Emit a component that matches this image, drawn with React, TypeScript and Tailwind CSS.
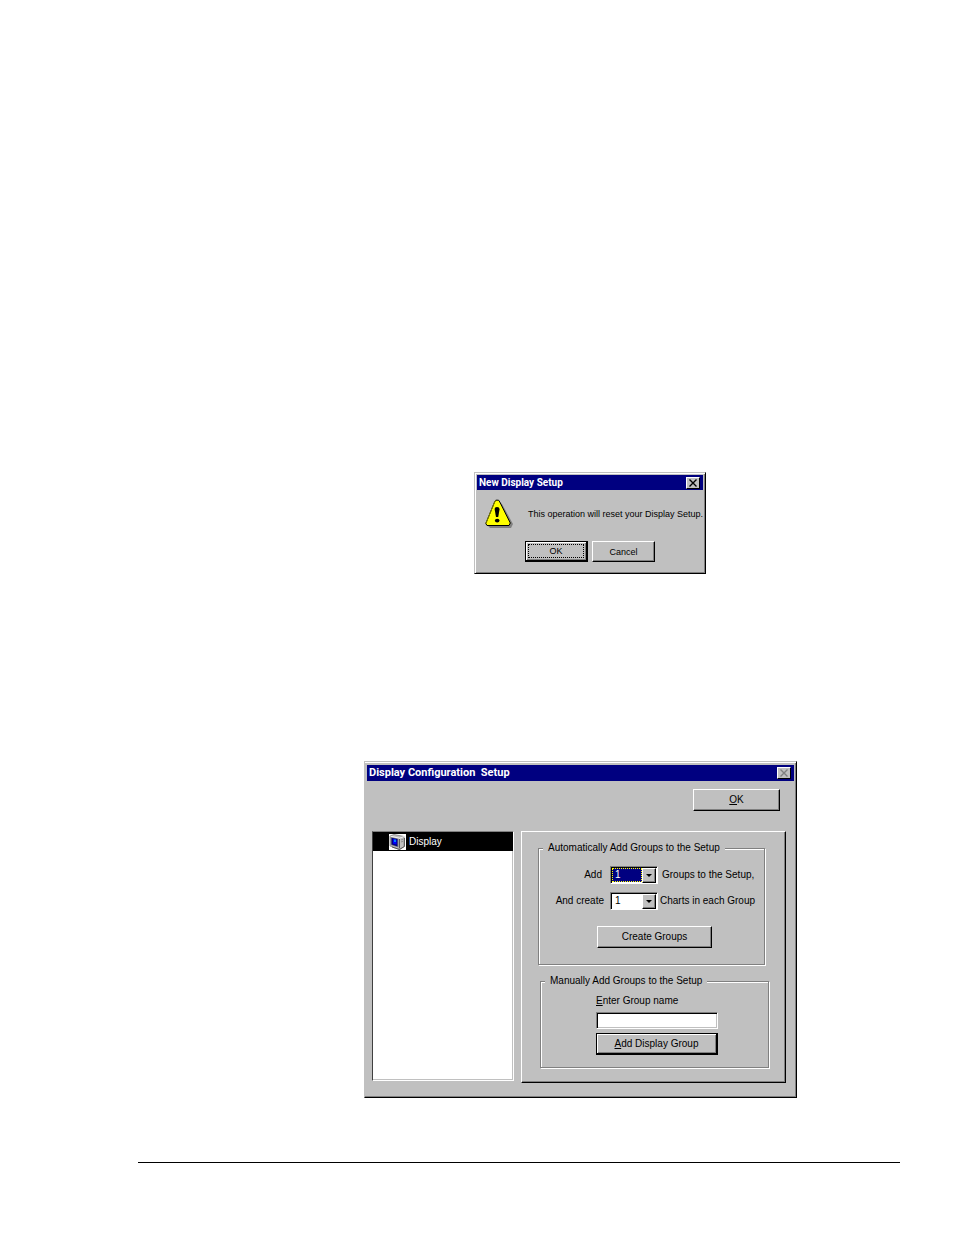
import type { ReactNode } from 'react';

interface TitleBarProps {
  title: string;
  className: string;
  disabled?: boolean;
}

function TitleBar({ title, className, disabled }: TitleBarProps) {
  return (
    <div className={`flex items-center justify-between bg-[#000080] pl-0.5 pr-[3px] ${className}`}>
      <h2 className="font-[Roboto,sans-serif] font-bold whitespace-pre text-white">{title}</h2>
      <button
        aria-label="Close"
        disabled={disabled}
        className="flex h-3 w-[14px] items-center justify-center border border-t-white border-l-white border-r-black border-b-black bg-[#c0c0c0] text-black disabled:text-[#808080]"
      >
        <svg className="h-[8px] w-[8px]" viewBox="0 0 8 8" fill="none" stroke="currentColor" strokeWidth="1.4">
          <path d="M.5 .5 7.5 7.5M7.5 .5 .5 7.5" />
        </svg>
      </button>
    </div>
  );
}

interface ButtonProps {
  children: ReactNode;
  className: string;
  isDefault?: boolean;
}

function Button({ children, className, isDefault }: ButtonProps) {
  const frame = isDefault
    ? 'border border-black border-r-2 border-b-2 shadow-[inset_1px_1px_#fff,inset_-1px_-1px_#808080]'
    : 'border border-t-white border-l-white border-r-black border-b-black shadow-[inset_-1px_-1px_#808080]';

  return (
    <button className={`flex items-center justify-center bg-[#c0c0c0] p-0.5 ${frame} ${className}`}>
      {children}
    </button>
  );
}

interface GroupBoxProps {
  title: string;
  className: string;
  children: ReactNode;
}

function GroupBox({ title, className, children }: GroupBoxProps) {
  return (
    <fieldset
      className={`min-w-0 border border-[#808080] shadow-[1px_1px_#fff,inset_1px_1px_#fff] ${className}`}
    >
      <legend className="ml-1 bg-[#c0c0c0] px-[5px] leading-4">{title}</legend>
      {children}
    </fieldset>
  );
}

interface ComboProps {
  id: string;
  focused?: boolean;
}

function Combo({ id, focused }: ComboProps) {
  return (
    <div className="relative h-[18px] w-12 border border-t-[#808080] border-l-[#808080] border-r-white border-b-white bg-white shadow-[inset_1px_1px_#000]">
      <div className="h-full w-full p-px">
        <select
          id={id}
          className={`block h-full w-[30px] appearance-none pl-0.5 leading-3 outline-none ${
            focused ? 'border border-dotted border-[#ffff00] bg-[#000080] text-white' : 'border border-white bg-white text-black'
          }`}
        >
          <option>1</option>
        </select>
      </div>
      <span className="pointer-events-none absolute top-px right-px bottom-0 flex w-[14px] items-center justify-center border border-t-white border-l-white border-r-black border-b-black bg-[#c0c0c0] shadow-[inset_-1px_-1px_#808080]">
        <svg className="h-[3px] w-[6px]" viewBox="0 0 6 3">
          <path d="M0 0h6L3 3z" fill="#000" />
        </svg>
      </span>
    </div>
  );
}

function WarningIcon() {
  return (
    <svg className="h-[30px] w-[28px] shrink-0" viewBox="0 0 28 30" aria-hidden="true">
      <path d="M14 3 17 5 28 25 26 29H5L3 27z" fill="#808080" />
      <path d="M10.8 1.2H13.6L14.8 3 25.3 24 24 26.5H2L.8 24.5 9.6 3z" fill="#ff0" stroke="#000" strokeWidth="1" />
      <path d="M.8 24.5 9.6 3 10.8 1.2" fill="none" stroke="#808000" strokeWidth="1" />
      <path d="M9.6 10Q9.6 8 12 8T14.6 10L13.2 18H11z" fill="#000" />
      <ellipse cx="12.2" cy="21.6" rx="2.3" ry="1.9" fill="#000" />
    </svg>
  );
}

function DisplayIcon() {
  return (
    <svg className="h-4 w-[17px]" viewBox="0 0 17 16" aria-hidden="true">
      <path d="M0 0h17v16H0z" fill="#fff" />
      <path d="M1 2 5 .5 15 2.5V12.5L10.5 15.5 1 12z" fill="#c0c0c0" stroke="#808080" strokeWidth=".8" />
      <path d="M1.5 2.2 10.5 4.2 15 2.5" fill="none" stroke="#fff" strokeWidth=".8" />
      <path d="M1.5 3 9.5 4.8V13.5L1.5 11z" fill="#808080" />
      <path d="M2.5 3.8 8.5 5V12.5L2.5 10.5z" fill="#000080" />
      <path d="M4 5 7.5 5.8V10.5L4 9.5z" fill="#00f" />
      <path d="M5 5.5H7V8H5z" fill="#0080ff" />
      <path d="M10.5 5V14.5" stroke="#404040" strokeWidth=".8" />
      <path d="M12 6 14 5.2M12 8 14 7.2" stroke="#808080" strokeWidth=".8" />
      <path d="M3 13 10.5 15.5 15.5 12.5V4" fill="none" stroke="#404040" strokeWidth=".8" />
    </svg>
  );
}

function NewDisplayDialog() {
  return (
    <section
      role="dialog"
      aria-label="New Display Setup"
      className="ml-[336px] w-[232px] border border-t-[#c0c0c0] border-l-[#c0c0c0] border-r-black border-b-black bg-[#c0c0c0] p-0.5 text-[9px] leading-3 shadow-[inset_1px_1px_#fff,inset_-1px_-1px_#808080]"
    >
      <TitleBar title="New Display Setup" className="h-[15px] text-[10px]" />
      <div className="flex items-center gap-[15px] px-2 pt-[9px]">
        <WarningIcon />
        <p className="whitespace-nowrap">This operation will reset your Display Setup.</p>
      </div>
      <div className="flex justify-center gap-1 pt-3 pb-[9px]">
        <Button className="h-[21px] w-[63px]" isDefault>
          <span className="w-full border border-dotted border-black">OK</span>
        </Button>
        <Button className="h-[21px] w-[63px]">Cancel</Button>
      </div>
    </section>
  );
}

function ConfigurationDialog() {
  return (
    <section
      role="dialog"
      aria-label="Display Configuration Setup"
      className="ml-[226px] w-[433px] border border-t-[#c0c0c0] border-l-[#c0c0c0] border-r-black border-b-black bg-[#c0c0c0] px-0.5 pt-[3px] pb-0.5 text-[10px] leading-4 shadow-[inset_0_1px_#fff,inset_-1px_-1px_#808080]"
    >
      <TitleBar title="Display Configuration  Setup" className="h-4 text-[11px]" disabled />
      <div className="flex justify-end pt-2 pr-3.5">
        <Button className="h-[22px] w-[87px]">
          <span><u>O</u>K</span>
        </Button>
      </div>
      <div className="flex items-start gap-[7px] px-[5px] pt-5 pb-3">
        <ul className="h-[250px] w-[142px] border border-t-[#808080] border-l-[#404040] border-r-white border-b-white bg-white shadow-[inset_-1px_-1px_#c0c0c0]">
          <li className="flex h-[19px] items-center gap-[3px] bg-black pl-4 text-white">
            <DisplayIcon />
            Display
          </li>
        </ul>
        <div className="w-[265px] border border-t-white border-l-white border-r-black border-b-black px-4 pt-2 pb-3.5 shadow-[inset_-1px_-1px_#808080]">
          <GroupBox title="Automatically Add Groups to the Setup" className="w-[227px] pb-4">
            <div className="mt-2.5 grid grid-cols-[71px_48px_1fr] items-center gap-y-2">
              <label htmlFor="groups" className="pr-2 text-right">Add</label>
              <Combo id="groups" focused />
              <span className="pl-1 whitespace-nowrap">Groups to the Setup,</span>
              <label htmlFor="charts" className="pr-1.5 text-right whitespace-nowrap">And create</label>
              <Combo id="charts" />
              <span className="pl-0.5 whitespace-nowrap">Charts in each Group</span>
            </div>
            <Button className="mt-4 ml-[58px] h-[22px] w-[115px]">Create Groups</Button>
          </GroupBox>
          <GroupBox title="Manually Add Groups to the Setup" className="mt-2 ml-0.5 w-[229px] pb-3">
            <div className="ml-[55px] flex w-[122px] flex-col pt-1">
              <label htmlFor="group-name"><u>E</u>nter Group name</label>
              <input
                id="group-name"
                type="text"
                className="mt-[3px] h-[17px] border border-t-[#808080] border-l-[#808080] border-r-white border-b-white bg-white px-1 shadow-[inset_1px_1px_#000,inset_-1px_-1px_#c0c0c0] outline-none"
              />
              <Button className="mt-1 h-[22px] w-full" isDefault>
                <span><u>A</u>dd Display Group</span>
              </Button>
            </div>
          </GroupBox>
        </div>
      </div>
    </section>
  );
}

export default function App() {
  return (
    <main className="min-h-screen bg-white pt-[472px] pr-[54px] pl-[138px] font-['Liberation_Sans',sans-serif] text-black">
      <NewDisplayDialog />
      <div className="mt-[187px]">
        <ConfigurationDialog />
      </div>
      <hr className="mt-16 border-t border-black" />
    </main>
  );
}
